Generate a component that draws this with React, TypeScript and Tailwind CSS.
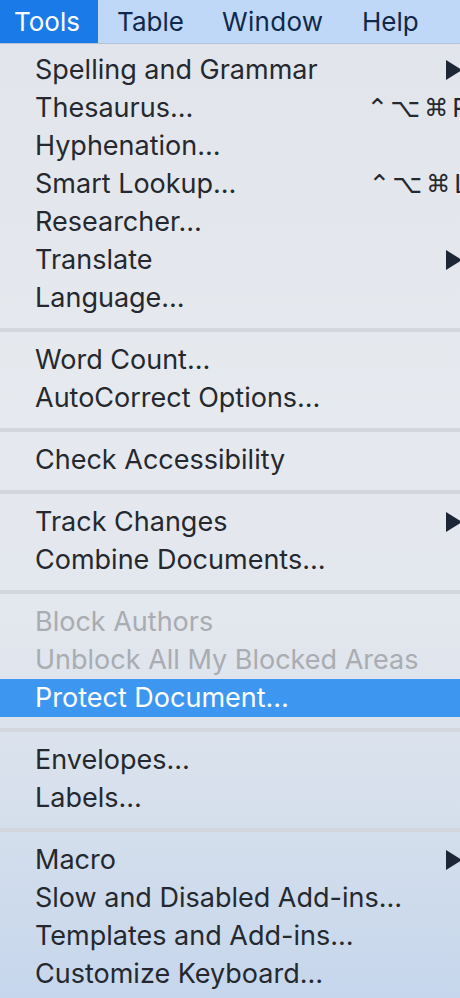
import React from "react";

type Item =
  | { kind: "item"; label: string; shortcut?: string; arrow?: boolean; disabled?: boolean; active?: boolean }
  | { kind: "sep" };

const items: Item[] = [
  { kind: "item", label: "Spelling and Grammar", arrow: true },
  { kind: "item", label: "Thesaurus…", shortcut: "R" },
  { kind: "item", label: "Hyphenation…" },
  { kind: "item", label: "Smart Lookup…", shortcut: "L" },
  { kind: "item", label: "Researcher…" },
  { kind: "item", label: "Translate", arrow: true },
  { kind: "item", label: "Language…" },
  { kind: "sep" },
  { kind: "item", label: "Word Count…" },
  { kind: "item", label: "AutoCorrect Options…" },
  { kind: "sep" },
  { kind: "item", label: "Check Accessibility" },
  { kind: "sep" },
  { kind: "item", label: "Track Changes", arrow: true },
  { kind: "item", label: "Combine Documents…" },
  { kind: "sep" },
  { kind: "item", label: "Block Authors", disabled: true },
  { kind: "item", label: "Unblock All My Blocked Areas", disabled: true },
  { kind: "item", label: "Protect Document…", active: true },
  { kind: "sep" },
  { kind: "item", label: "Envelopes…" },
  { kind: "item", label: "Labels…" },
  { kind: "sep" },
  { kind: "item", label: "Macro", arrow: true },
  { kind: "item", label: "Slow and Disabled Add-ins…" },
  { kind: "item", label: "Templates and Add-ins…" },
  { kind: "item", label: "Customize Keyboard…" },
];

function Arrow({ white }: { white?: boolean }) {
  return (
    <svg width="16" height="20" viewBox="0 0 16 20" className="shrink-0">
      <polygon points="0,0 16,10 0,20" fill={white ? "#ffffff" : "#1c2636"} />
    </svg>
  );
}

export default function App() {
  return (
    <div
      className="w-[460px] h-[998px] overflow-hidden bg-[linear-gradient(180deg,#e1e5eb_0%,#e6e9ee_40%,#e3e7ee_62%,#d5dfec_82%,#c6d6ec_100%)]"
      style={{ fontFamily: "Inter, 'Noto Sans', 'DejaVu Sans', sans-serif" }}
    >
      <div className="flex h-[44px] bg-[#c0d8f7] border-b border-[#b3c2d6] text-[26px] text-[#10284a] leading-[43px]">
        <div className="w-[98px] shrink-0 pl-[14px] bg-[#1a7ae8] text-white">Tools</div>
        <div className="w-[107px] shrink-0 pl-[19px]">Table</div>
        <div className="w-[138px] shrink-0 pl-[17px] tracking-[0.3px]">Window</div>
        <div className="w-[120px] shrink-0 pl-[19px]">Help</div>
      </div>
      <div className="w-[480px] pt-[7px] text-[27px]">
        {items.map((it, i) =>
          it.kind === "sep" ? (
            <div key={i} className="h-[24px] pt-[11px]">
              <div className="h-[4px] bg-[#d3d7dd]" />
            </div>
          ) : (
            <div
              key={i}
              className={
                "flex items-center h-[38px] pl-[35px] pr-[11px] leading-[38px] " +
                (it.active
                  ? "bg-[#3d97f1] text-white"
                  : it.disabled
                  ? "text-[#a9acb1]"
                  : "text-[#25292f]")
              }
            >
              <span className="flex-1 whitespace-nowrap">{it.label}</span>
              {it.shortcut && (
                <span className="flex items-center whitespace-nowrap" style={{ fontFamily: "'DejaVu Sans', sans-serif" }}>
                  <span className="text-[26px] mr-[2px]">⌃</span>
                  <span className="text-[26px] mr-[4px]">⌥</span>
                  <span className="text-[24px] mr-[4px]">⌘</span>
                  <span className="text-[26px]" style={{ fontFamily: "Inter, sans-serif" }}>{it.shortcut}</span>
                </span>
              )}
              {it.arrow && (
                <span className="flex items-center mr-[7px]">
                  <Arrow white={it.active} />
                </span>
              )}
            </div>
          )
        )}
      </div>
    </div>
  );
}
